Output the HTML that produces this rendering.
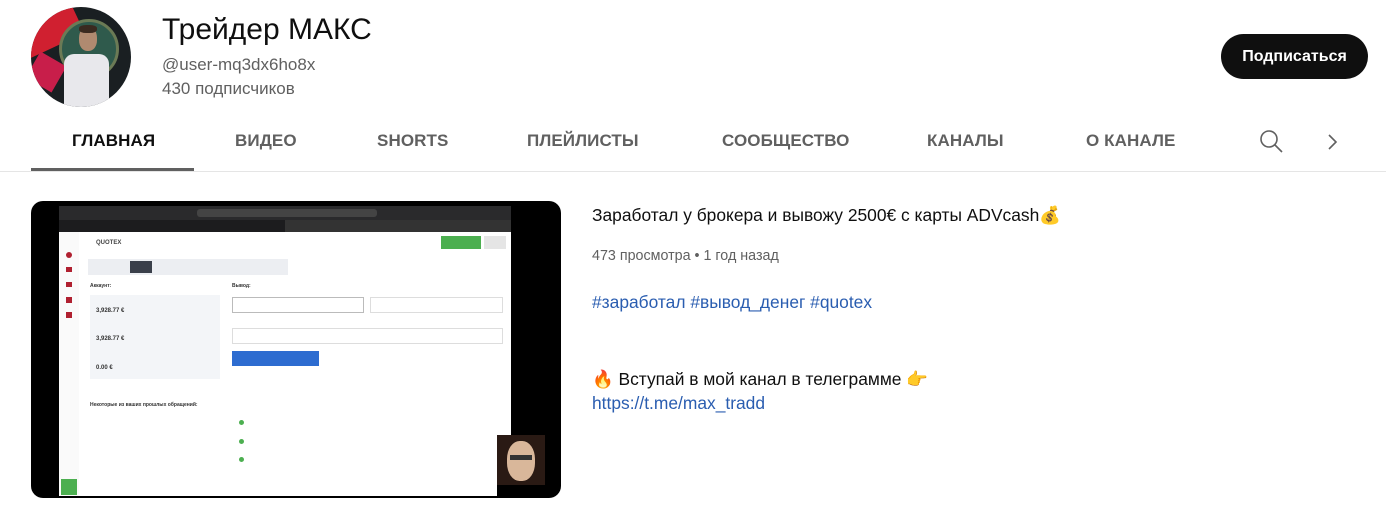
<!DOCTYPE html>
<html><head><meta charset="utf-8"><style>
*{margin:0;padding:0;box-sizing:border-box}
body{width:1386px;height:518px;background:#fff;font-family:"Liberation Sans",Arial,sans-serif;position:relative;overflow:hidden;color:#0f0f0f}
.a{position:absolute;white-space:nowrap}
.tab{position:absolute;top:131px;font-size:17px;font-weight:bold;color:#606060;letter-spacing:0.1px}
.sm{position:absolute;font-size:5px;color:#777;white-space:nowrap}
</style></head><body>
<div class="a" style="left:31px;top:7px;width:100px;height:100px;border-radius:50%;overflow:hidden;background:#1a1f22">
 <div style="position:absolute;left:-10px;top:10px;width:60px;height:30px;background:#d02030;transform:rotate(-25deg)"></div>
 <div style="position:absolute;left:0;top:50px;width:30px;height:30px;background:#c81e4a;transform:rotate(30deg)"></div>
 <div style="position:absolute;left:28px;top:12px;width:60px;height:60px;border-radius:50%;background:#2f5a4c;border:3px solid #6b7a55"></div>
 <div style="position:absolute;left:48px;top:20px;width:18px;height:24px;border-radius:45%;background:#b08a70"></div>
 <div style="position:absolute;left:48px;top:18px;width:18px;height:8px;border-radius:40%;background:#3a2a20"></div>
 <div style="position:absolute;left:33px;top:47px;width:45px;height:60px;border-radius:10px 10px 0 0;background:#e8e8ec"></div>
</div>
<div class="a" style="left:162px;top:13px;font-size:30px;color:#0f0f0f">Трейдер МАКС</div>
<div class="a" style="left:162px;top:55px;font-size:17px;color:#606060">@user-mq3dx6ho8x</div>
<div class="a" style="left:162px;top:79px;font-size:17px;color:#606060">430 подписчиков</div>
<div class="a" style="left:1221px;top:34px;width:147px;height:45px;border-radius:23px;background:#0f0f0f;color:#fff;font-size:16px;font-weight:bold;text-align:center;line-height:45px">Подписаться</div>
<div class="tab" style="left:72px;color:#0f0f0f">ГЛАВНАЯ</div>
<div class="tab" style="left:235px">ВИДЕО</div>
<div class="tab" style="left:377px">SHORTS</div>
<div class="tab" style="left:527px">ПЛЕЙЛИСТЫ</div>
<div class="tab" style="left:722px">СООБЩЕСТВО</div>
<div class="tab" style="left:927px">КАНАЛЫ</div>
<div class="tab" style="left:1086px">О КАНАЛЕ</div>
<svg class="a" style="left:1259px;top:129px" width="26" height="26" viewBox="0 0 26 26"><circle cx="10" cy="10" r="8" fill="none" stroke="#606060" stroke-width="1.6"/><path d="M16 16 L23 23" stroke="#606060" stroke-width="1.6"/></svg>
<svg class="a" style="left:1326px;top:132px" width="14" height="20" viewBox="0 0 14 20"><path d="M3 3 L10 10 L3 17" fill="none" stroke="#606060" stroke-width="1.6"/></svg>
<div class="a" style="left:31px;top:168px;width:163px;height:3px;background:#606060"></div>
<div class="a" style="left:0;top:171px;width:1386px;height:1px;background:#e5e5e5"></div>
<div class="a" style="left:31px;top:201px;width:530px;height:297px;border-radius:12px;background:#000;overflow:hidden">
 <div style="position:absolute;left:28px;top:5px;width:452px;height:290px;background:#fff;overflow:hidden">
  <div style="position:absolute;left:0;top:0;width:452px;height:14px;background:#2a2a2c"></div>
  <div style="position:absolute;left:138px;top:3px;width:180px;height:8px;border-radius:3px;background:#444"></div>
  <div style="position:absolute;left:0;top:14px;width:452px;height:12px;background:#1c1c1e"></div>
  <div style="position:absolute;left:226px;top:14px;width:226px;height:12px;background:#333"></div>
  <div style="position:absolute;left:0;top:26px;width:20px;height:264px;background:#fafafa"></div>
  <div style="position:absolute;left:7px;top:46px;width:6px;height:6px;border-radius:50%;background:#b02030"></div>
  <div style="position:absolute;left:7px;top:61px;width:6px;height:5px;background:#b02030"></div>
  <div style="position:absolute;left:7px;top:76px;width:6px;height:5px;background:#b02030"></div>
  <div style="position:absolute;left:7px;top:91px;width:6px;height:6px;background:#b02030"></div>
  <div style="position:absolute;left:7px;top:106px;width:6px;height:6px;background:#b02030"></div>
  <div style="position:absolute;left:2px;top:273px;width:16px;height:16px;background:#4caf50"></div>
  <div class="sm" style="left:37px;top:34px;font-size:6px;color:#444;font-weight:bold">QUOTEX</div>
  <div style="position:absolute;left:29px;top:53px;width:200px;height:16px;background:#eceef2"></div>
  <div style="position:absolute;left:71px;top:55px;width:22px;height:12px;background:#3a3f4a"></div>
  <div style="position:absolute;left:382px;top:30px;width:40px;height:13px;background:#4caf50"></div>
  <div style="position:absolute;left:425px;top:30px;width:22px;height:13px;background:#e5e5e5"></div>
  <div class="sm" style="left:31px;top:77px;color:#333;font-weight:bold">Аккаунт:</div>
  <div class="sm" style="left:173px;top:77px;color:#333;font-weight:bold">Вывод:</div>
  <div style="position:absolute;left:31px;top:89px;width:130px;height:84px;background:#f3f5f8"></div>
  <div class="sm" style="left:37px;top:102px;color:#333;font-size:6px;font-weight:bold">3,928.77 €</div>
  <div class="sm" style="left:37px;top:130px;color:#333;font-size:6px;font-weight:bold">3,928.77 €</div>
  <div class="sm" style="left:37px;top:159px;color:#333;font-size:6px;font-weight:bold">0.00 €</div>
  <div style="position:absolute;left:173px;top:91px;width:132px;height:16px;border:1px solid #bbb"></div>
  <div style="position:absolute;left:311px;top:91px;width:133px;height:16px;border:1px solid #ddd"></div>
  <div style="position:absolute;left:173px;top:122px;width:271px;height:16px;border:1px solid #ddd"></div>
  <div style="position:absolute;left:173px;top:145px;width:87px;height:15px;background:#2d6cd0"></div>
  <div class="sm" style="left:31px;top:196px;color:#333;font-weight:bold">Некоторые из ваших прошлых обращений:</div>
  <div style="position:absolute;left:180px;top:214px;width:5px;height:5px;border-radius:50%;background:#4caf50"></div>
  <div style="position:absolute;left:180px;top:233px;width:5px;height:5px;border-radius:50%;background:#4caf50"></div>
  <div style="position:absolute;left:180px;top:251px;width:5px;height:5px;border-radius:50%;background:#4caf50"></div>
  <div style="position:absolute;left:438px;top:256px;width:14px;height:34px;background:#000"></div>
 </div>
 <div style="position:absolute;left:466px;top:234px;width:48px;height:50px;background:#2a1a14;overflow:hidden">
  <div style="position:absolute;left:10px;top:6px;width:28px;height:40px;border-radius:45%;background:#d9b79a"></div>
  <div style="position:absolute;left:13px;top:20px;width:22px;height:5px;background:#333"></div>
 </div>
</div>
<div class="a" style="left:592px;top:205px;font-size:17.4px;color:#0f0f0f">Заработал у брокера и вывожу 2500€ с карты ADVcash<span style="color:#c8961e">💰</span></div>
<div class="a" style="left:592px;top:248px;font-size:14.3px;color:#606060">473 просмотра • 1 год назад</div>
<div class="a" style="left:592px;top:292px;font-size:17.4px;color:#2a5db0">#заработал #вывод_денег #quotex</div>
<div class="a" style="left:592px;top:369px;font-size:17.4px;color:#0f0f0f"><span style="color:#e8651a">🔥</span> Вступай в мой канал в телеграмме <span style="color:#e8b030">👉</span></div>
<div class="a" style="left:592px;top:393px;font-size:17.4px;color:#2a5db0">https://t.me/max_tradd</div>
</body></html>
